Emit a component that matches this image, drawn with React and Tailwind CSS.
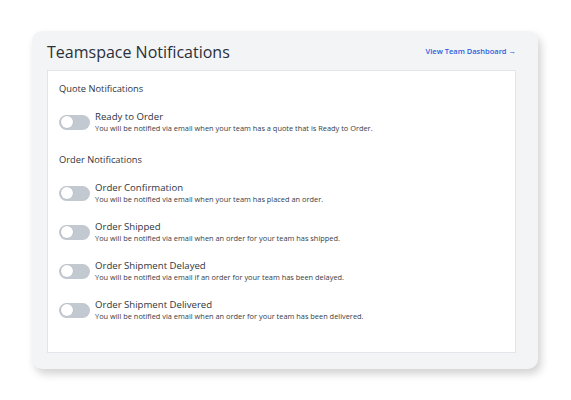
import React from "react";

const orderItems = [
  {
    title: "Order Confirmation",
    desc: "You will be notified via email when your team has placed an order.",
  },
  {
    title: "Order Shipped",
    desc: "You will be notified via email when an order for your team has shipped.",
  },
  {
    title: "Order Shipment Delayed",
    desc: "You will be notified via email if an order for your team has been delayed.",
  },
  {
    title: "Order Shipment Delivered",
    desc: "You will be notified via email when an order for your team has been delivered.",
  },
];

const Toggle = () => (
  <div className="w-[31px] h-[15px] rounded-full bg-[#c3c9d0] flex items-center px-[1.5px] shrink-0">
    <div className="w-[12px] h-[12px] rounded-full bg-white shadow-[0_0_0_0.5px_rgba(0,0,0,0.08)]"></div>
  </div>
);

const Row = ({ title, desc }) => (
  <div className="flex items-center gap-[5px]">
    <Toggle />
    <div>
      <div className="text-[9.6px] leading-[13px] text-[#2f3540]">{title}</div>
      <div className="text-[7.4px] leading-[11px] text-[#363c47]">{desc}</div>
    </div>
  </div>
);

const App = () => {
  return (
    <div
      className="w-[571px] h-[400px] bg-white pt-[31px] pl-[32px]"
      style={{ fontFamily: '"Open Sans", "Noto Sans", sans-serif' }}
    >
      <div className="w-[506px] h-[338px] bg-[#f3f4f6] rounded-[10px] shadow-[3px_5px_8px_rgba(0,0,0,0.18)] pl-[15px] pr-[22px] flex flex-col">
        <div className="h-[39px] flex items-center justify-between pt-[3px]">
          <h1 className="text-[16px] leading-[20px] font-normal text-[#2b303a]">
            Teamspace Notifications
          </h1>
          <a className="text-[7.5px] font-semibold text-[#2c5fe0] cursor-pointer">
            View Team Dashboard →
          </a>
        </div>
        <div className="h-[283px] bg-white border border-[#e2e5e9] px-[11px] pt-[12px]">
          <div className="text-[9.3px] leading-[12px] font-medium text-[#2f3540]">
            Quote Notifications
          </div>
          <div className="mt-[15px]">
            <Row
              title="Ready to Order"
              desc="You will be notified via email when your team has a quote that is Ready to Order."
            />
          </div>
          <div className="mt-[20px] text-[9.3px] leading-[12px] font-medium text-[#2f3540]">
            Order Notifications
          </div>
          <div className="mt-[15px] flex flex-col gap-[15px]">
            {orderItems.map((item) => (
              <Row key={item.title} title={item.title} desc={item.desc} />
            ))}
          </div>
        </div>
      </div>
    </div>
  );
};

export default App;
